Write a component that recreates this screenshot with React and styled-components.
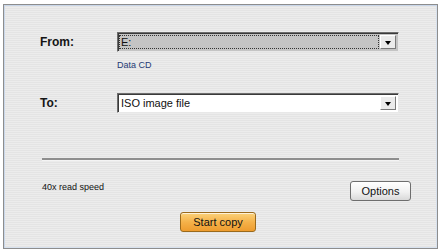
import React from "react";
import styled, { createGlobalStyle } from "styled-components";

const GlobalStyle = createGlobalStyle`
  html, body {
    margin: 0;
    padding: 0;
    background: #ffffff;
  }
  body {
    font-family: 'Liberation Sans', Arial, sans-serif;
    color: #111;
  }
`;

const Frame = styled.div`
  box-sizing: border-box;
  width: 435px;
  height: 245px;
  margin: 4px 0 0 3px;
  border: 1px solid #8d8d8d;
  box-shadow: inset 1px 1px 0 #c9d7ea, inset -1px -1px 0 #d8e2ef;
  background: repeating-linear-gradient(
    to bottom,
    #ececec 0px,
    #ececec 1px,
    #e4e4e4 1px,
    #e4e4e4 2px
  );
  display: flex;
  flex-direction: column;
  padding-top: 27px;
`;

const Form = styled.div`
  display: flex;
  flex-direction: column;
  padding-left: 36px;
`;

const FieldRow = styled.div`
  display: flex;
  align-items: center;
  margin-top: ${(p) => p.$gap || 0}px;
`;

const Label = styled.span`
  width: 77px;
  font-size: 12px;
  font-weight: bold;
  color: #151515;
`;

const Select = styled.div`
  box-sizing: border-box;
  width: 282px;
  height: 20px;
  display: flex;
  align-items: stretch;
  border: 1px solid;
  border-color: #6d6d6d #e8e8e8 #e8e8e8 #6d6d6d;
  box-shadow: inset 1px 1px 0 #3a3a3a;
  background: ${(p) => (p.$disabled ? "#c4c4c4" : "#ffffff")};
`;

const SelectValue = styled.div`
  flex: 1;
  display: flex;
  align-items: center;
  padding-left: 2px;
  margin: 2px 1px 2px 1px;
  font-size: 11px;
  color: #111;
  outline: ${(p) => (p.$focused ? "1px dotted #333" : "none")};
  outline-offset: -1px;
`;

const DropButton = styled.div`
  box-sizing: border-box;
  width: 16px;
  margin: 2px 2px 2px 0;
  background: #ebebeb;
  border: 1px solid;
  border-color: #ffffff #7a7a7a #7a7a7a #ffffff;
  display: flex;
  align-items: center;
  justify-content: center;
`;

const Arrow = styled.span`
  width: 0;
  height: 0;
  border-left: 3.5px solid transparent;
  border-right: 3.5px solid transparent;
  border-top: 4px solid #000;
  margin-top: 1px;
`;

const Hint = styled.div`
  margin: 8px 0 0 77px;
  font-size: 9px;
  line-height: 11px;
  color: #1f3a74;
`;

const Separator = styled.div`
  width: 357px;
  height: 2px;
  margin: 45px 0 0 38px;
  background: #8e8e8e;
  border-bottom: 1px solid #f4f4f4;
`;

const InfoRow = styled.div`
  display: flex;
  justify-content: space-between;
  align-items: flex-start;
  margin: 20px 0 0 38px;
  padding-right: 26px;
`;

const Info = styled.span`
  font-size: 9px;
  line-height: 11px;
  margin-top: 1px;
  color: #111;
`;

const Button = styled.button`
  box-sizing: border-box;
  height: 20px;
  padding: 0;
  font-family: 'Liberation Sans', Arial, sans-serif;
  font-size: 11px;
  color: #111;
  border-radius: 3px;
  cursor: pointer;
  border: 1px solid ${(p) => (p.$primary ? "#9a6a1c" : "#6e6e6e")};
  background: ${(p) =>
    p.$primary
      ? "linear-gradient(to bottom, #fbd27a 0%, #f5b24a 50%, #ee9c2e 100%)"
      : "linear-gradient(to bottom, #ffffff 0%, #f1f1f1 55%, #d9d9d9 100%)"};
  box-shadow: inset 0 1px 0 rgba(255, 255, 255, 0.7);
  width: ${(p) => p.$width}px;
`;

const Footer = styled.div`
  display: flex;
  justify-content: center;
  margin-top: 11px;
  padding-right: 5px;
`;

const Dropdown = ({ value, disabled, focused }) => (
  <Select $disabled={disabled}>
    <SelectValue $focused={focused}>{value}</SelectValue>
    <DropButton>
      <Arrow />
    </DropButton>
  </Select>
);

const App = () => (
  <>
    <GlobalStyle />
    <Frame>
      <Form>
        <FieldRow>
          <Label>From:</Label>
          <Dropdown value="E:" disabled focused />
        </FieldRow>
        <Hint>Data CD</Hint>
        <FieldRow $gap={22}>
          <Label>To:</Label>
          <Dropdown value="ISO image file" />
        </FieldRow>
      </Form>
      <Separator />
      <InfoRow>
        <Info>40x read speed</Info>
        <Button $width={61}>Options</Button>
      </InfoRow>
      <Footer>
        <Button $primary $width={76}>Start copy</Button>
      </Footer>
    </Frame>
  </>
);

export default App;
